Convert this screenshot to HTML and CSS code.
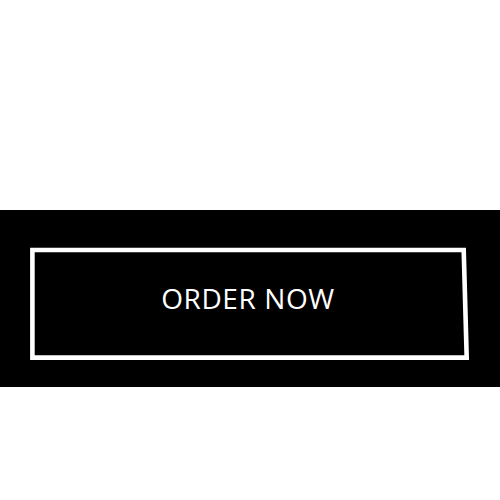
FILE: index.html
```html
<!DOCTYPE html>
<html>
<head>
<meta charset="utf-8">
<link rel="stylesheet" href="styles.css">
</head>
<body>
<div class="page">
  <section class="band">
    <div class="button">
      <svg class="frame" width="500" height="177" viewBox="0 0 500 177">
        <path d="M32.4 40 L463.7 40 L466.7 147.6 L32.4 147.6 Z" fill="none" stroke="#fff" stroke-width="4.6" stroke-linejoin="miter"/>
      </svg>
      <span class="label">ORDER NOW</span>
    </div>
  </section>
</div>
</body>
</html>
```
FILE: styles.css
```css
html, body {
  margin: 0;
  padding: 0;
  background: #fff;
}
.page {
  width: 500px;
  height: 500px;
  padding-top: 210px;
  box-sizing: border-box;
}
.band {
  background: #000;
  height: 177px;
  position: relative;
}
.button {
  height: 177px;
  display: flex;
  align-items: center;
  justify-content: center;
  position: relative;
}
.frame {
  position: absolute;
  left: 0;
  top: 0;
}
.label {
  position: relative;
  color: #fff;
  font-family: "Open Sans", sans-serif;
  font-size: 28px;
  font-weight: 400;
  letter-spacing: 0.6px;
  line-height: 1;
  margin-left: -4px;
  margin-top: -2px;
}
```
